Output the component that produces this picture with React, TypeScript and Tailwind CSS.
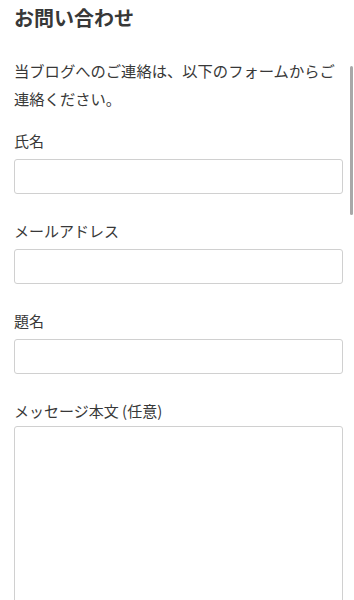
export default function App() {
  const font = { fontFamily: '"Noto Sans CJK JP", "Noto Sans", sans-serif' };
  return (
    <div
      className="relative min-h-[600px] bg-white pl-[14px] pr-[11px] pt-[4px] pb-10 text-[#383838]"
      style={font}
    >
      <h1 className="text-[20px] font-bold leading-[28px]">お問い合わせ</h1>
      <p className="mt-[24px] text-[15.3px] leading-[28px]">
        当ブログへのご連絡は、以下のフォームからご連絡ください。
      </p>

      <form className="mt-[17px] flex flex-col">
        <label className="flex flex-col">
          <span className="text-[15px] leading-[24px]">氏名</span>
          <input
            type="text"
            className="mt-[6px] h-[35px] w-full rounded-[3px] border border-[#d0d0d0] bg-white px-2 outline-none"
          />
        </label>

        <label className="mt-[25px] flex flex-col">
          <span className="text-[15px] leading-[24px]">メールアドレス</span>
          <input
            type="email"
            className="mt-[6px] h-[35px] w-full rounded-[3px] border border-[#d0d0d0] bg-white px-2 outline-none"
          />
        </label>

        <label className="mt-[25px] flex flex-col">
          <span className="text-[15px] leading-[24px]">題名</span>
          <input
            type="text"
            className="mt-[6px] h-[35px] w-full rounded-[3px] border border-[#d0d0d0] bg-white px-2 outline-none"
          />
        </label>

        <label className="mt-[25px] flex flex-col">
          <span className="text-[15px] leading-[24px]">メッセージ本文 (任意)</span>
          <textarea className="mt-[3px] h-[260px] w-full resize-none rounded-[3px] border border-[#d0d0d0] bg-white p-2 outline-none" />
        </label>
      </form>

      <div className="absolute right-[1px] top-[66px] h-[149px] w-[3px] rounded-full bg-[#a8a8a8]" />
    </div>
  );
}
